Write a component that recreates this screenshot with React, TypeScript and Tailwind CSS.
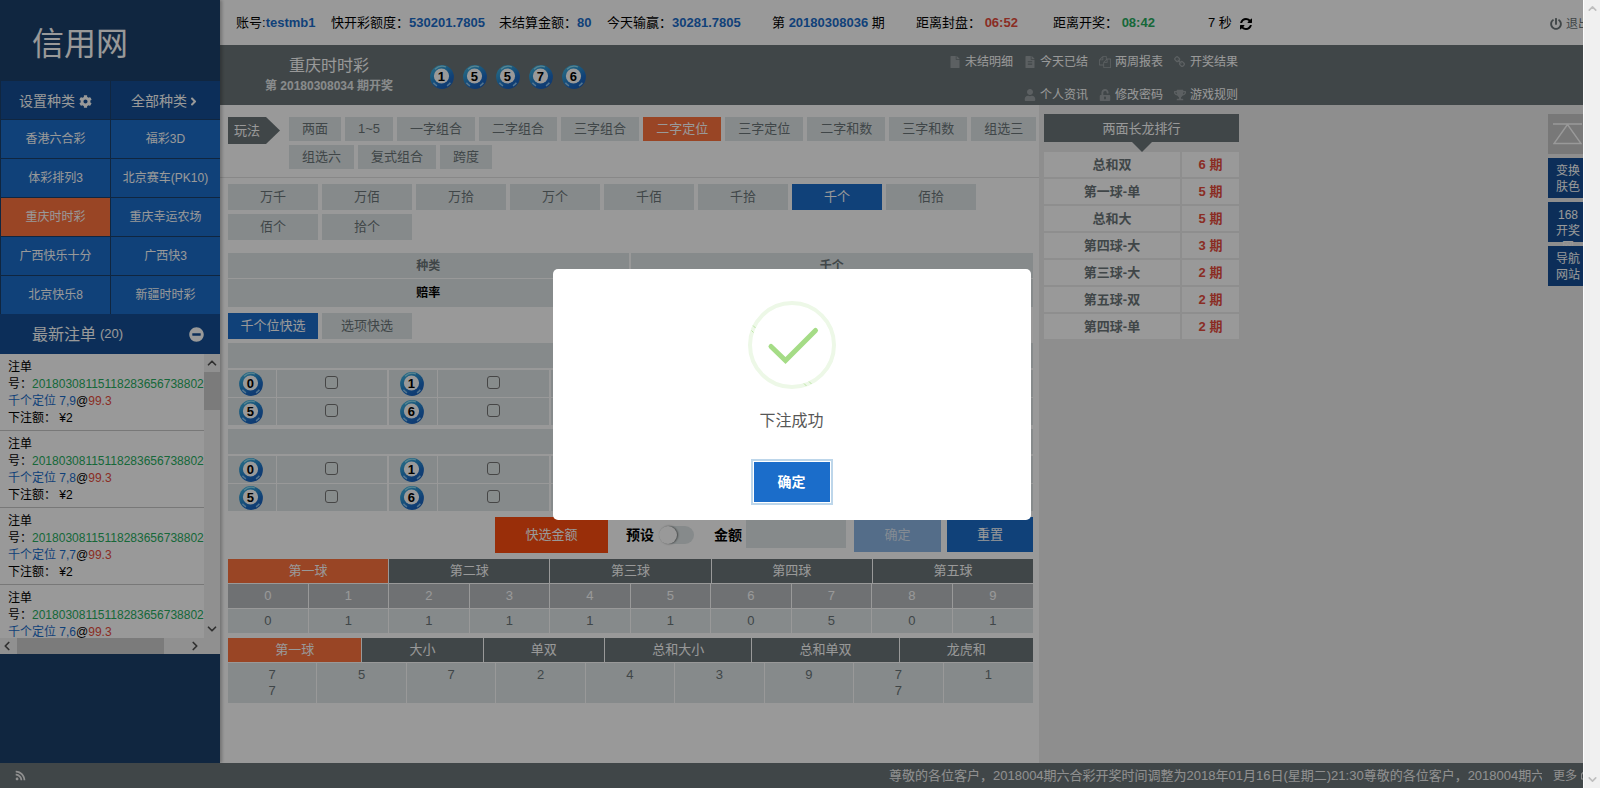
import React from "react";
import {
  FaCog,
  FaAngleRight,
  FaMinusCircle,
  FaFile,
  FaFileAlt,
  FaUser,
  FaUnlockAlt,
  FaTrophy,
  FaPowerOff,
  FaRss,
} from "react-icons/fa";
import { ChevronDown, ChevronLeft, ChevronRight, ChevronUp } from "lucide-react";

type IconProps = { size?: number; className?: string };

function glyph(d: string) {
  return function Glyph({ size = 12, className }: IconProps) {
    return (
      <svg width={size} height={size} viewBox="0 0 1792 1792" fill="currentColor" className={className}>
        <path d={d} />
      </svg>
    );
  };
}

const FilesIcon = glyph(
  "M1696 384q40 0 68 28t28 68v1216q0 40-28 68t-68 28h-960q-40 0-68-28t-28-68v-288h-544q-40 0-68-28t-28-68v-672q0-40 20-88t48-76l408-408q28-28 76-48t88-20h416q40 0 68 28t28 68v328q68-40 128-40h416zm-544 213l-299 299h299v-299zm-640-384l-299 299h299v-299zm196 647l316-316v-416h-384v416q0 40-28 68t-68 28h-416v640h512v-256q0-40 20-88t48-76zm956 804v-1152h-384v416q0 40-28 68t-68 28h-416v640h896z"
);

const ChainIcon = glyph(
  "M1456 1216q0-40-28-68l-208-208q-28-28-68-28-42 0-72 32 3 3 19 18.5t21.5 21.5 15 19 13 25.5 3.5 27.5q0 40-28 68t-68 28q-15 0-27.5-3.5t-25.5-13-19-15-21.5-21.5-18.5-19q-33 31-33 73 0 40 28 68l206 207q27 27 68 27 40 0 68-26l147-146q28-28 28-67zm-703-705q0-40-28-68l-206-207q-28-28-68-28-39 0-68 27l-147 146q-28 28-28 67 0 40 28 68l208 208q27 27 68 27 42 0 72-31-3-3-19-18.5t-21.5-21.5-15-19-13-25.5-3.5-27.5q0-40 28-68t68-28q15 0 27.5 3.5t25.5 13 19 15 21.5 21.5 18.5 19q33-31 33-73zm895 705q0 120-85 203l-147 146q-83 83-203 83-121 0-204-85l-206-207q-83-83-83-203 0-123 88-209l-88-88q-86 88-208 88-120 0-204-84l-208-208q-84-84-84-204t85-203l147-146q83-83 203-83 121 0 204 85l206 207q83 83 83 203 0 123-88 209l88 88q86-88 208-88 120 0 204 84l208 208q84 84 84 204z"
);

const RefreshIcon = glyph(
  "M1639 1056q0 5-1 7-64 268-268 434.5t-478 166.5q-146 0-282.5-55t-243.5-157l-129 129q-19 19-45 19t-45-19-19-45v-448q0-26 19-45t45-19h448q26 0 45 19t19 45-19 45l-137 137q71 66 161 102t187 36q134 0 250-65t186-179q11-17 53-117 8-23 30-23h192q13 0 22.5 9.5t9.5 22.5zm25-800v448q0 26-19 45t-45 19h-448q-26 0-45-19t-19-45 19-45l138-138q-148-137-349-137-134 0-250 65t-186 179q-11 17-53 117-8 23-30 23h-199q-13 0-22.5-9.5t-9.5-22.5v-7q65-268 270-434.5t480-166.5q146 0 284 55.5t245 156.5l130-129q19-19 45-19t45 19 19 45z"
);

const games = [
  "香港六合彩",
  "福彩3D",
  "体彩排列3",
  "北京赛车(PK10)",
  "重庆时时彩",
  "重庆幸运农场",
  "广西快乐十分",
  "广西快3",
  "北京快乐8",
  "新疆时时彩",
];

const playTypes = [
  "两面",
  "1~5",
  "一字组合",
  "二字组合",
  "三字组合",
  "二字定位",
  "三字定位",
  "二字和数",
  "三字和数",
  "组选三",
  "组选六",
  "复式组合",
  "跨度",
];

const positions = ["万千", "万佰", "万拾", "万个", "千佰", "千拾", "千个", "佰拾", "佰个", "拾个"];

const ranking = [
  ["总和双", "6 期"],
  ["第一球-单", "5 期"],
  ["总和大", "5 期"],
  ["第四球-大", "3 期"],
  ["第三球-大", "2 期"],
  ["第五球-双", "2 期"],
  ["第四球-单", "2 期"],
];

const bets = ["7,9", "7,8", "7,7", "7,6"];

function Ball({ n }: { n: number }) {
  return (
    <svg width="24" height="24" viewBox="0 0 24 24" className="shrink-0">
      <defs>
        <linearGradient id="ballBlue" x1="0.1" y1="0" x2="0.8" y2="1">
          <stop offset="0" stopColor="#45b8e2" />
          <stop offset="0.4" stopColor="#2b8fd0" />
          <stop offset="0.7" stopColor="#1b6cc6" />
          <stop offset="1" stopColor="#1a5db8" />
        </linearGradient>
      </defs>
      <circle cx="12" cy="12" r="11.9" fill="url(#ballBlue)" />
      <path d="M5 4.2A10.6 10.6 0 0 1 16 2" fill="none" stroke="#8fdcf2" strokeWidth="1.3" />
      <path d="M3.4 17.8A10.3 10.3 0 0 0 7 20.8" fill="none" stroke="#8cc4ee" strokeWidth="1.5" />
      <path d="M17 20.8A10.3 10.3 0 0 0 20.4 17.8" fill="none" stroke="#8cc4ee" strokeWidth="1.5" />
      <circle cx="11.5" cy="11" r="7.6" fill="#fff" />
      <text
        x="11.3"
        y="15.6"
        textAnchor="middle"
        fontSize="13"
        fontWeight="700"
        fill="#000"
        fontFamily="Liberation Sans, Arial, sans-serif"
      >
        {n}
      </text>
    </svg>
  );
}

function Sidebar() {
  return (
    <aside className="z-10 flex w-[220px] shrink-0 flex-col bg-[#1b406b] text-white shadow-[2px_0_3px_rgba(0,0,0,0.25)]">
      <h1 className="flex h-20 items-center pt-2 pl-8 text-[32px] leading-8">信用网</h1>
      <div className="grid grid-cols-2 gap-px pt-px pl-px">
        <button className="flex h-[38px] items-center justify-center gap-1 bg-[#144e94] pt-0.5 text-sm">
          设置种类
          <FaCog size={13} />
        </button>
        <button className="flex h-[38px] items-center justify-center bg-[#144e94] pt-0.5 text-sm">
          全部种类
          <FaAngleRight size={13} />
        </button>
        {games.map((g) => (
          <button
            key={g}
            className={`h-[38px] text-xs ${g === "重庆时时彩" ? "bg-[#ff733f]" : "bg-[#1b6dca]"}`}
          >
            {g}
          </button>
        ))}
      </div>
      <div className="flex h-10 shrink-0 items-center bg-[#144e94] pr-4 pl-8">
        <h2 className="pt-0.5 text-base">最新注单</h2>
        <span className="ml-1 flex-1 text-[13px]">(20)</span>
        <button aria-label="收起">
          <FaMinusCircle size={15} />
        </button>
      </div>
      <div className="grid grid-cols-[1fr_16px] grid-rows-[284px_16px] bg-[#f0f0f0]">
        <ul className="overflow-hidden bg-white text-xs leading-[17px] text-black">
          {bets.map((b) => (
            <li key={b} className="border-b border-[#c8c8c8] px-2 pt-[5px] pb-[3px]">
              <div>注单</div>
              <div className="whitespace-nowrap">
                号：<span className="text-[#27ae60]">201803081151182836567388024</span>
              </div>
              <div>
                <span className="text-[#1b6dca]">千个定位 {b}</span>@<span className="text-[#e74c3c]">99.3</span>
              </div>
              <div>下注额： ¥2</div>
            </li>
          ))}
        </ul>
        <div className="flex flex-col items-center text-[#505050]">
          <ChevronUp size={14} strokeWidth={3} className="my-0.5" />
          <div className="h-[38px] w-full bg-[#cdcdcd]" />
          <ChevronDown size={14} strokeWidth={3} className="mt-auto mb-0.5" />
        </div>
        <div className="flex items-center text-[#505050]">
          <ChevronLeft size={14} strokeWidth={3} className="mr-[3px]" />
          <div className="h-full w-[147px] bg-[#cdcdcd]" />
          <ChevronRight size={14} strokeWidth={3} className="mr-0.5 ml-auto" />
        </div>
      </div>
    </aside>
  );
}

function TopBar() {
  const num = "font-bold text-[#1b6dca]";
  return (
    <header className="flex h-[45px] shrink-0 items-center overflow-hidden bg-white pl-4 text-[13px] whitespace-nowrap text-black">
      <span className="w-[95px]">
        账号:<b className={num}>testmb1</b>
      </span>
      <span className="w-[168px]">
        快开彩额度：<b className={num}>530201.7805</b>
      </span>
      <span className="w-[108px]">
        未结算金额：<b className={num}>80</b>
      </span>
      <span className="w-[165px]">
        今天输赢：<b className={num}>30281.7805</b>
      </span>
      <span className="w-36">
        第 <b className={num}>20180308036</b> 期
      </span>
      <span className="w-[137px]">
        距离封盘： <b className="font-bold text-[#e74c3c]">06:52</b>
      </span>
      <span className="w-[155px]">
        距离开奖： <b className="font-bold text-[#27ae60]">08:42</b>
      </span>
      <span>7 秒</span>
      <button aria-label="刷新" className="ml-[7px] pt-0.5">
        <RefreshIcon size={14} />
      </button>
      <a href="#logout" className="-mr-[7px] ml-auto flex items-center gap-1 pt-0.5 text-xs text-[#6b7578]">
        <FaPowerOff size={12} />
        退出
      </a>
    </header>
  );
}

const linkRows = [
  [
    { t: "未结明细", i: FaFile },
    { t: "今天已结", i: FaFileAlt },
    { t: "两周报表", i: FilesIcon },
    { t: "开奖结果", i: ChainIcon },
  ],
  [
    { t: "个人资讯", i: FaUser },
    { t: "修改密码", i: FaUnlockAlt },
    { t: "游戏规则", i: FaTrophy },
  ],
];

function DrawBar() {
  return (
    <section className="flex h-[60px] shrink-0 bg-[#6b7578] text-white">
      <div className="flex w-[210px] flex-col items-center justify-center pt-0.5 pl-2">
        <h2 className="text-base leading-5">重庆时时彩</h2>
        <p className="text-xs leading-5 font-bold whitespace-nowrap text-[#e4e8e9]">第 20180308034 期开奖</p>
      </div>
      <div className="flex flex-1 items-center gap-[9px] pt-[3px]">
        {[1, 5, 5, 7, 6].map((n, k) => (
          <Ball key={k} n={n} />
        ))}
      </div>
      <nav className="mr-[345px] flex flex-col text-xs">
        {linkRows.map((row, r) => (
          <div key={r} className="flex h-[33px] shrink-0 justify-end gap-[11px]">
            {row.map(({ t, i: Icon }) => (
              <a key={t} href="#nav" className="flex items-center gap-1">
                <Icon size={12} className="text-[#9aa1a4]" />
                {t}
              </a>
            ))}
          </div>
        ))}
      </nav>
    </section>
  );
}

function CheckGrid() {
  return (
    <div className="mt-1">
      <div className="h-[25px] bg-[#dfe7e8]" />
      <div className="mt-0.5 grid grid-cols-5 gap-x-0.5 gap-y-px">
        {[0, 1, 2, 3, 4, 5, 6, 7, 8, 9].map((n) => (
          <label key={n} className="flex h-[27px] gap-px">
            <span className="flex w-12 items-center justify-center bg-[#dfe7e8] pr-0.5">
              <Ball n={n} />
            </span>
            <span className="flex flex-1 items-center justify-center bg-[#dfe7e8] pr-px pb-0.5">
              <input
                type="checkbox"
                aria-label={`${n}`}
                className="size-[13px] appearance-none rounded-[3px] border border-[#767676] bg-white/10"
              />
            </span>
          </label>
        ))}
      </div>
    </div>
  );
}

function PlayArea() {
  const tab = "bg-[#dfe7e8] text-[#6b7578]";
  return (
    <main className="w-[819px] shrink-0 bg-white text-[13px]">
      <div className="flex border-b border-[#e3e3e3] pt-3 pb-2 pl-2">
        <div className="flex h-[27px] shrink-0">
          <span className="flex w-[38px] items-center justify-center bg-[#6b7578] text-white">玩法</span>
          <svg width="14" height="27" viewBox="0 0 14 27">
            <path d="M0 0L14 13.5L0 27Z" fill="#6b7578" />
          </svg>
        </div>
        <div className="ml-[9px] flex flex-wrap gap-1">
          {playTypes.map((p) => (
            <button key={p} className={`h-6 px-[13px] ${p === "二字定位" ? "bg-[#ff733f] text-white" : tab}`}>
              {p}
            </button>
          ))}
        </div>
      </div>
      <div className="pr-1.5 pl-2">
        <div className="mt-1.5 flex flex-wrap gap-1">
          {positions.map((p) => (
            <button key={p} className={`h-[26px] w-[90px] ${p === "千个" ? "bg-[#1b6dca] text-white" : tab}`}>
              {p}
            </button>
          ))}
        </div>
        <table className="mt-[13px] w-full table-fixed border-separate border-spacing-0 text-xs font-bold">
          <thead>
            <tr>
              <th className="h-[26px] border-r-2 border-b border-white bg-[#dfe7e8] p-0 text-[#6b7578]">种类</th>
              <th className="h-[26px] border-b border-white bg-[#dfe7e8] p-0 text-[#6b7578]">千个</th>
            </tr>
          </thead>
          <tbody>
            <tr>
              <td className="h-7 border-r-2 border-white bg-[#dfe7e8] p-0 text-center">赔率</td>
              <td className="h-7 bg-[#dfe7e8] p-0 text-center text-[#e74c3c]">99.3</td>
            </tr>
          </tbody>
        </table>
        <div className="mt-1.5 flex gap-1">
          <button className="h-[26px] w-[90px] bg-[#1b6dca] text-white">千个位快选</button>
          <button className={`h-[26px] w-[90px] ${tab}`}>选项快选</button>
        </div>
        <CheckGrid />
        <CheckGrid />
        <div className="mt-1.5 flex h-9 items-start justify-end text-[13px]">
          <button className="h-9 w-[113px] bg-[#ff4d0f] text-white">快选金额</button>
          <span className="ml-[18px] flex h-9 items-center text-sm font-bold">预设</span>
          <button
            role="switch"
            aria-checked="false"
            aria-label="预设"
            className="mt-[9px] ml-[5px] h-[18px] w-[35px] rounded-full bg-[#dfe7e8]"
          >
            <span className="block size-[18px] rounded-full bg-white shadow-[1px_0_2px_rgba(0,0,0,0.5)]" />
          </button>
          <label htmlFor="amount" className="ml-5 flex h-9 items-center text-sm font-bold">
            金额
          </label>
          <input id="amount" className="ml-1 h-[31px] w-[100px] bg-[#dfe7e8] px-2" />
          <button className="ml-2 h-[35px] w-[87px] bg-[#8db6e4] text-white/70" disabled>
            确定
          </button>
          <button className="ml-1.5 h-[35px] w-[86px] bg-[#1b6dca] text-white">重置</button>
        </div>
        <div className="mt-1.5 grid grid-cols-5 gap-px">
          {["第一球", "第二球", "第三球", "第四球", "第五球"].map((t, k) => (
            <button key={t} className={`h-6 text-white ${k === 0 ? "bg-[#ff733f]" : "bg-[#6b7578]"}`}>
              {t}
            </button>
          ))}
        </div>
        <table className="w-full table-fixed border-separate border-spacing-0 text-center">
          <thead>
            <tr>
              {[0, 1, 2, 3, 4, 5, 6, 7, 8, 9].map((n) => (
                <th
                  key={n}
                  className="h-[25px] border-t border-r border-white bg-[#b9bdc0] p-0 font-normal text-white last:border-r-0"
                >
                  {n}
                </th>
              ))}
            </tr>
          </thead>
          <tbody>
            <tr>
              {[0, 1, 1, 1, 1, 1, 0, 5, 0, 1].map((n, k) => (
                <td
                  key={k}
                  className="h-[25px] border-t border-r border-white bg-[#dfe7e8] p-0 text-[#6b7578] last:border-r-0"
                >
                  {n}
                </td>
              ))}
            </tr>
          </tbody>
        </table>
        <div className="mt-[5px] flex gap-px">
          {["第一球", "大小", "单双", "总和大小", "总和单双", "龙虎和"].map((t, k) => (
            <button key={t} className={`h-6 flex-auto text-white ${k === 0 ? "bg-[#ff733f]" : "bg-[#6b7578]"}`}>
              {t}
            </button>
          ))}
        </div>
        <table className="w-full table-fixed border-separate border-spacing-0 text-center leading-4">
          <tbody>
            <tr>
              {["7 7", "5", "7", "2", "4", "3", "9", "7 7", "1"].map((v, k) => (
                <td
                  key={k}
                  className="h-[41px] border-t border-r border-white bg-[#dfe7e8] px-0 py-1 align-top text-[#6b7578] last:border-r-0"
                >
                  {v.split(" ").map((x, j) => (
                    <div key={j}>{x}</div>
                  ))}
                </td>
              ))}
            </tr>
          </tbody>
        </table>
      </div>
    </main>
  );
}

function Ranking() {
  return (
    <section className="ml-[5px] w-[195px] pt-[9px] text-[13px]">
      <h3 className="flex h-7 items-center justify-center bg-[#6b7578] pt-0.5 text-white">两面长龙排行</h3>
      <svg width="20" height="10" viewBox="0 0 20 10" className="mx-auto">
        <path d="M0 0H20L10 10Z" fill="#6b7578" />
      </svg>
      <table className="w-full table-fixed border-separate border-spacing-0 text-center font-bold">
        <tbody>
          {ranking.map(([a, b]) => (
            <tr key={a}>
              <td className="h-[27px] border-r-2 border-b-2 border-[#ededed] bg-white p-0 text-[#6b7578]">{a}</td>
              <td className="h-[27px] w-[57px] border-b-2 border-[#ededed] bg-white p-0 text-[#e74c3c]">{b}</td>
            </tr>
          ))}
        </tbody>
      </table>
    </section>
  );
}

function SideTools() {
  const box = "flex h-10 w-10 flex-col items-center bg-[#144e94] pt-[5px] text-white";
  return (
    <div className="-mr-[5px] ml-auto flex flex-col gap-1 pt-[9px] text-xs leading-4">
      <button aria-label="返回顶部" className="flex h-10 w-10 items-center bg-[#c8c8c8] pl-[5px]">
        <svg width="30" height="22" viewBox="0 0 30 22" fill="none" stroke="#fff" strokeWidth="1.4">
          <path d="M0 1H29M14.5 1.5L1 20.5H28Z" />
        </svg>
      </button>
      <button className={box}>
        <span>变换</span>
        <span>肤色</span>
      </button>
      <button className={box}>
        <span>168</span>
        <span>开奖</span>
        <span>网</span>
      </button>
      <button className={`${box} relative`}>
        <span>导航</span>
        <span>网站</span>
      </button>
    </div>
  );
}

function Footer() {
  const notice = "尊敬的各位客户，2018004期六合彩开奖时间调整为2018年01月16日(星期二)21:30";
  return (
    <footer className="z-20 flex h-[25px] shrink-0 items-center overflow-hidden bg-[#6b7578] pl-[15px] text-[13px] whitespace-nowrap text-[#f0f0f0]">
      <FaRss size={11} />
      <div className="ml-auto w-[653px] overflow-hidden">
        {notice}
        {notice}
      </div>
      <a href="#more" className="-mr-2.5 ml-[11px] flex items-center gap-1 text-xs">
        更多
        <FilesIcon size={12} />
      </a>
    </footer>
  );
}

function SuccessDialog() {
  return (
    <div className="absolute inset-0 z-30 flex items-center justify-center bg-black/40">
      <div
        role="dialog"
        aria-modal="true"
        aria-label="下注成功"
        className="flex w-[478px] flex-col items-center rounded-[5px] bg-white pt-8 pb-[18px]"
      >
        <svg width="88" height="88" viewBox="0 0 88 88" fill="none">
          <circle cx="44" cy="44" r="42" stroke="#edf8e7" strokeWidth="4" />
          <path d="M23 45.5L37.5 59.5L67.5 29.5" stroke="#a5dc86" strokeWidth="5" strokeLinecap="round" />
          <path d="M5 24.5L7.5 27M3.5 29.5L5.5 31.5M56 82.5L58.5 85M61 80.5L63.5 83" stroke="#a5dc86" strokeWidth="0.7" />
        </svg>
        <p className="mt-5 text-base leading-6 text-[#575757]">下注成功</p>
        <button className="mt-[29px] h-10 w-[76px] bg-[#1b6dca] text-sm font-bold text-white shadow-[0_0_0_1px_#fff,0_0_0_3px_#bdd6ea]">
          确定
        </button>
      </div>
    </div>
  );
}

export default function App() {
  return (
    <div className="flex h-screen overflow-hidden font-['Liberation_Sans','Noto_Sans_CJK_SC',sans-serif]">
      <div className="relative flex min-w-0 flex-1 flex-col overflow-hidden">
        <div className="flex min-h-0 flex-1">
          <Sidebar />
          <div className="flex min-w-0 flex-1 flex-col bg-[#ededed]">
            <TopBar />
            <DrawBar />
            <div className="flex min-h-0 flex-1">
              <PlayArea />
              <Ranking />
              <SideTools />
            </div>
          </div>
        </div>
        <Footer />
        <SuccessDialog />
      </div>
      <div className="flex w-[17px] shrink-0 flex-col items-center justify-between border-l border-white bg-[#f0f0f0] py-0.5 text-[#bfbfbf]">
        <ChevronUp size={13} strokeWidth={3} />
        <ChevronDown size={13} strokeWidth={3} />
      </div>
    </div>
  );
}
